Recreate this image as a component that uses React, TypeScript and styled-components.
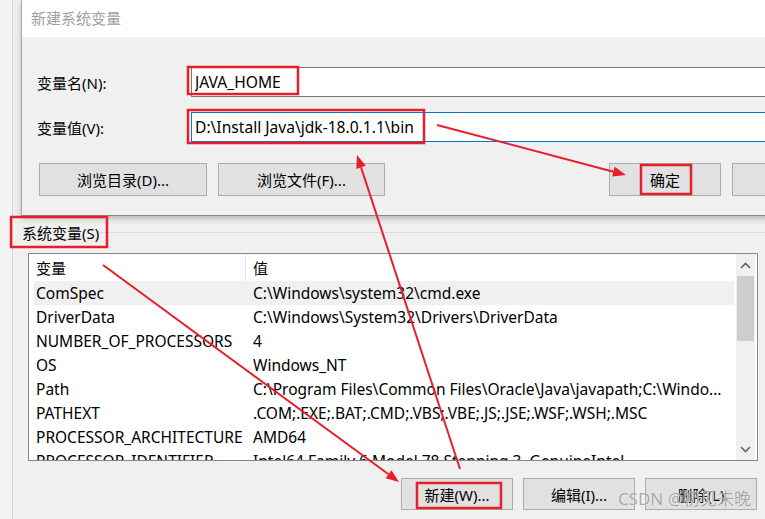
import React from 'react';
import styled, { createGlobalStyle } from 'styled-components';

const GlobalStyle = createGlobalStyle`
  html, body {
    margin: 0;
    padding: 0;
    background: #f0f0f0;
  }
  * {
    box-sizing: border-box;
  }
`;

interface EnvVar {
  name: string;
  value: string;
}

const systemVars: EnvVar[] = [
  { name: 'ComSpec', value: 'C:\\Windows\\system32\\cmd.exe' },
  { name: 'DriverData', value: 'C:\\Windows\\System32\\Drivers\\DriverData' },
  { name: 'NUMBER_OF_PROCESSORS', value: '4' },
  { name: 'OS', value: 'Windows_NT' },
  { name: 'Path', value: 'C:\\Program Files\\Common Files\\Oracle\\Java\\javapath;C:\\Windo...' },
  { name: 'PATHEXT', value: '.COM;.EXE;.BAT;.CMD;.VBS;.VBE;.JS;.JSE;.WSF;.WSH;.MSC' },
  { name: 'PROCESSOR_ARCHITECTURE', value: 'AMD64' },
  { name: 'PROCESSOR_IDENTIFIER', value: 'Intel64 Family 6 Model 78 Stepping 3, GenuineIntel' }
];

const RED = '#e61f2a';

function Arrow({ x1, y1, x2, y2 }: { x1: number; y1: number; x2: number; y2: number }) {
  // 箭头三角形
  const a = Math.atan2(y2 - y1, x2 - x1);
  const len = 13;
  const half = 5;
  const bx = x2 - len * Math.cos(a);
  const by = y2 - len * Math.sin(a);
  const p1 = `${x2},${y2}`;
  const p2 = `${bx + half * Math.sin(a)},${by - half * Math.cos(a)}`;
  const p3 = `${bx - half * Math.sin(a)},${by + half * Math.cos(a)}`;
  return (
    <g>
      <line x1={x1} y1={y1} x2={bx} y2={by} stroke={RED} strokeWidth={2} />
      <polygon points={`${p1} ${p2} ${p3}`} fill={RED} />
    </g>
  );
}

function Chevron({ up }: { up?: boolean }) {
  return (
    <svg width="11" height="7" viewBox="0 0 11 7">
      <path
        d={up ? 'M1 6 L5.5 1.5 L10 6' : 'M1 1 L5.5 5.5 L10 1'}
        fill="none"
        stroke="#606060"
        strokeWidth="1.6"
      />
    </svg>
  );
}

export default function App() {
  return (
    <>
      <GlobalStyle />
      <Page>
        <SideStrip />
        <Window>
          <DialogArea>
            <Dialog>
              <TitleBar>新建系统变量</TitleBar>
              <DialogBody>
                <FieldRow>
                  <FieldLabel>变量名(N):</FieldLabel>
                  <TextInput readOnly defaultValue="JAVA_HOME" />
                </FieldRow>
                <FieldRow>
                  <FieldLabel>变量值(V):</FieldLabel>
                  <TextInput readOnly focused defaultValue="D:\Install Java\jdk-18.0.1.1\bin" />
                </FieldRow>
                <DialogButtons>
                  <WinButton width={168}>浏览目录(D)...</WinButton>
                  <WinButton width={167}>浏览文件(F)...</WinButton>
                  <Spacer />
                  <WinButton width={112}>确定</WinButton>
                  <WinButton width={112}>取消</WinButton>
                </DialogButtons>
              </DialogBody>
            </Dialog>
          </DialogArea>

          <GroupHeader>
            <GroupLabel>系统变量(S)</GroupLabel>
          </GroupHeader>

          <ListView>
            <ListArea>
              <ListHeader>
                <HeaderCell width={217}>变量</HeaderCell>
                <HeaderCell>值</HeaderCell>
              </ListHeader>
              <Rows>
                {systemVars.map((v, i) => (
                  <Row key={v.name} selected={i === 0}>
                    <NameCell>{v.name}</NameCell>
                    <ValueCell>{v.value}</ValueCell>
                  </Row>
                ))}
              </Rows>
            </ListArea>
            <ScrollBar>
              <ScrollArrow>
                <Chevron up />
              </ScrollArrow>
              <ScrollTrack>
                <ScrollThumb />
              </ScrollTrack>
              <ScrollArrow>
                <Chevron />
              </ScrollArrow>
            </ScrollBar>
          </ListView>

          <BottomButtons>
            <WinButton width={112} height={32}>新建(W)...</WinButton>
            <WinButton width={112} height={32}>编辑(I)...</WinButton>
            <WinButton width={112} height={32}>删除(L)</WinButton>
          </BottomButtons>
        </Window>

        <Watermark>CSDN @初见未晚</Watermark>

        <Annotations width="765" height="519" viewBox="0 0 765 519">
          <rect x={188} y={67} width={110} height={27} fill="none" stroke={RED} strokeWidth={2.5} />
          <rect x={188} y={110} width={236} height={33} fill="none" stroke={RED} strokeWidth={2.5} />
          <rect x={641} y={165} width={50} height={29} fill="none" stroke={RED} strokeWidth={2.5} />
          <rect x={11} y={217} width={96} height={30} fill="none" stroke={RED} strokeWidth={2.5} />
          <rect x={417} y={483} width={84} height={25} fill="none" stroke={RED} strokeWidth={2.5} />
          <Arrow x1={437} y1={125} x2={626} y2={175} />
          <Arrow x1={103} y1={265} x2={399} y2={482} />
          <Arrow x1={460} y1={469} x2={357} y2={155} />
        </Annotations>
      </Page>
    </>
  );
}

const Page = styled.div`
  position: relative;
  width: 765px;
  height: 519px;
  overflow: hidden;
  display: flex;
  background: #f0f0f0;
  font-family: 'Noto Sans', 'Noto Sans CJK SC', sans-serif;
  font-size: 15px;
  color: #000;
`;

const SideStrip = styled.div`
  width: 13px;
  flex-shrink: 0;
  background: #f4f4f4;
  border-right: 1px solid #d6d6d6;
`;

const Window = styled.div`
  flex: 1;
  min-width: 0;
  display: flex;
  flex-direction: column;
`;

const DialogArea = styled.div`
  padding-left: 8px;
  position: relative;
  z-index: 1;
`;

const Dialog = styled.div`
  width: 860px;
  border-left: 1px solid #a8a8a8;
  border-bottom: 1px solid #8a8a8a;
  box-shadow: 0 3px 6px rgba(0, 0, 0, 0.22);
  background: #f0f0f0;
`;

const TitleBar = styled.div`
  height: 37px;
  background: #fff;
  color: #a0a0a0;
  padding-left: 9px;
  line-height: 36px;
`;

const DialogBody = styled.div`
  padding: 30px 0 19px 15px;
  display: flex;
  flex-direction: column;
  gap: 15px;
`;

const FieldRow = styled.div`
  display: flex;
  align-items: center;
  height: 30px;
`;

const FieldLabel = styled.div`
  width: 154px;
  flex-shrink: 0;
`;

const TextInput = styled.input<{ focused?: boolean }>`
  flex: 1;
  height: 30px;
  border: 1px solid ${(p) => (p.focused ? '#0078d7' : '#7a7a7a')};
  border-right: none;
  background: #fff;
  padding: 0 0 0 3px;
  font: inherit;
  font-size: 15.6px;
  color: #000;
  outline: none;
`;

const DialogButtons = styled.div`
  display: flex;
  gap: 11px;
  margin-top: 6px;
  padding-left: 2px;
  padding-right: 37px;
`;

const Spacer = styled.div`
  flex: 1;
`;

const WinButton = styled.button<{ width: number; height?: number }>`
  width: ${(p) => p.width}px;
  height: ${(p) => p.height ?? 33}px;
  flex-shrink: 0;
  background: #e1e1e1;
  border: 1px solid #adadad;
  font: inherit;
  color: #000;
  padding: 0;
`;

const GroupHeader = styled.div`
  height: 33px;
  display: flex;
  align-items: center;
  padding-left: 8px;
  &::after {
    content: '';
    flex: 1;
    height: 1px;
    background: #dcdcdc;
  }
`;

const GroupLabel = styled.span`
  padding: 0 1px;
`;

const ListView = styled.div`
  margin: 4px 0 0 15px;
  width: 730px;
  height: 208px;
  border: 1px solid #828790;
  background: #fff;
  display: flex;
  padding-right: 2px;
  overflow: hidden;
`;

const ListArea = styled.div`
  flex: 1;
  min-width: 0;
  overflow: hidden;
`;

const ListHeader = styled.div`
  display: flex;
  height: 27px;
`;

const HeaderCell = styled.div<{ width?: number }>`
  width: ${(p) => (p.width ? `${p.width}px` : 'auto')};
  flex: ${(p) => (p.width ? 'none' : '1')};
  padding-left: 7px;
  line-height: 28px;
  border-right: ${(p) => (p.width ? '1px solid #e5e5e5' : 'none')};
`;

const Rows = styled.div`
  padding: 0 2px 0 5px;
`;

const Row = styled.div<{ selected?: boolean }>`
  display: grid;
  grid-template-columns: 212px 1fr;
  height: 24px;
  line-height: 24px;
  font-size: 15.5px;
  background: ${(p) => (p.selected ? '#f0f0f0' : 'transparent')};
  white-space: nowrap;
`;

const NameCell = styled.div`
  padding-left: 2px;
  overflow: hidden;
`;

const ValueCell = styled.div`
  padding-left: 7px;
  overflow: hidden;
`;

const ScrollBar = styled.div`
  width: 19px;
  flex-shrink: 0;
  background: #f0f0f0;
  display: flex;
  flex-direction: column;
`;

const ScrollArrow = styled.div`
  height: 22px;
  display: flex;
  align-items: center;
  justify-content: center;
`;

const ScrollTrack = styled.div`
  flex: 1;
  padding: 0 1px;
`;

const ScrollThumb = styled.div`
  height: 65px;
  background: #cdcdcd;
`;

const BottomButtons = styled.div`
  display: flex;
  justify-content: flex-end;
  gap: 10px;
  margin-top: 17px;
  padding-right: 8px;
`;

const Watermark = styled.div`
  position: absolute;
  z-index: 2;
  right: 14px;
  top: 485px;
  font-size: 17px;
  color: rgba(140, 140, 140, 0.75);
  text-shadow: 0 0 1px #fff;
  pointer-events: none;
  white-space: nowrap;
`;

const Annotations = styled.svg`
  position: absolute;
  z-index: 3;
  left: 0;
  top: 0;
  pointer-events: none;
`;
